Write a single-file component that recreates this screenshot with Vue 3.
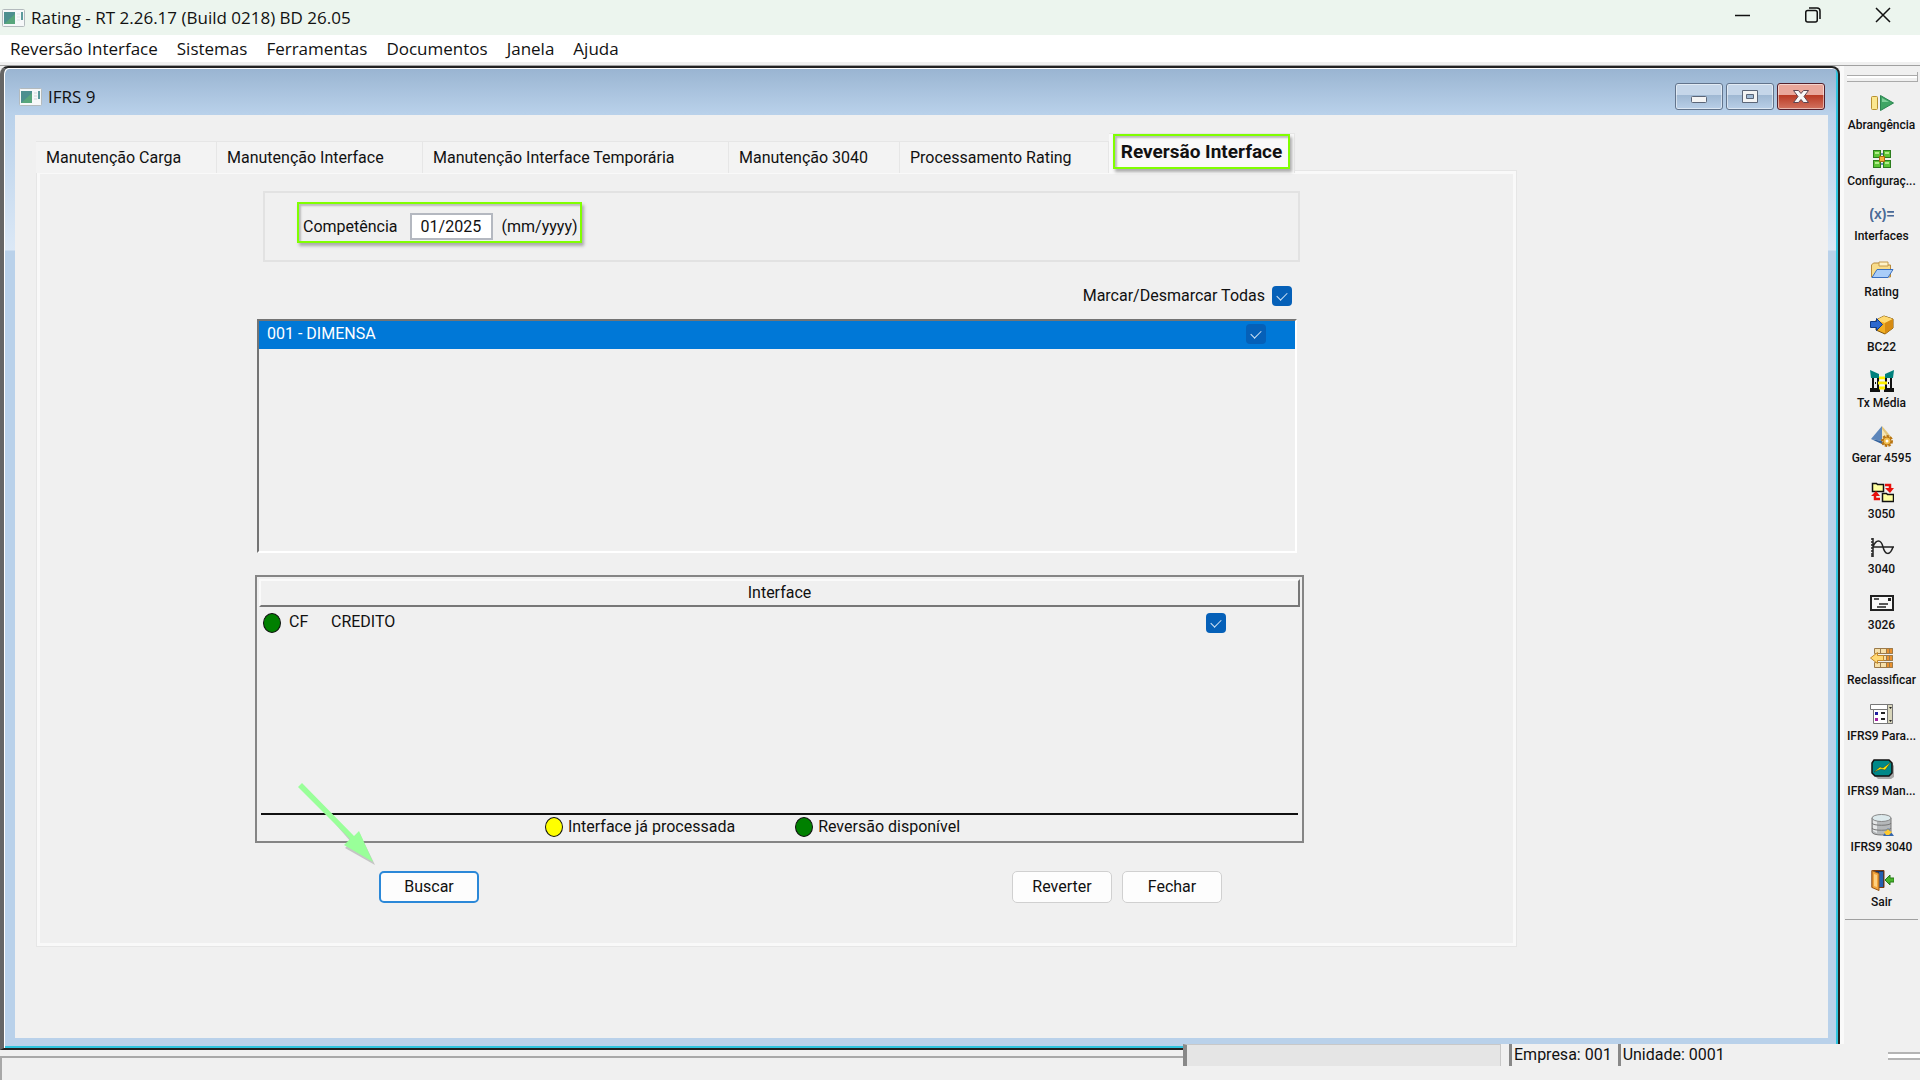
<script setup>
import { ref } from 'vue'

const menus = ['Reversão Interface', 'Sistemas', 'Ferramentas', 'Documentos', 'Janela', 'Ajuda']

const tabs = [
  'Manutenção Carga',
  'Manutenção Interface',
  'Manutenção Interface Temporária',
  'Manutenção 3040',
  'Processamento Rating',
  'Reversão Interface',
]
const activeTab = ref('Reversão Interface')

const competencia = ref('01/2025')
const todas = ref(true)
const empresas = ref([{ code: '001', name: 'DIMENSA', checked: true }])
const interfaces = ref([{ code: 'CF', name: 'CREDITO', checked: true }])

const tools = [
  {
    label: 'Abrangência',
    icon: '<rect x="1.5" y="4.5" width="6" height="13" rx="1" fill="#fbe78f" stroke="#b8902f"/><path d="M10.5 3.5v15l13-7.5z" fill="#3fa564" stroke="#2b8550"/><path d="M12 6v4l7 0z" fill="#7fd09a"/>',
  },
  {
    label: 'Configuraç...',
    icon: '<path d="M7 7l10 9M17 7L7 16M7 6h10M7 16h10" stroke="#3f6ea8" stroke-width="1.5"/><g fill="#5cc435" stroke="#2c7d1e"><rect x="3.5" y="2.5" width="7" height="7"/><rect x="13.5" y="2.5" width="7" height="7"/><rect x="3.5" y="12.5" width="7" height="7"/><rect x="13.5" y="12.5" width="7" height="7"/></g><path d="M5 4h4v2H5zM15 4h4v2h-4zM5 14h4v2H5zM15 14h4v2h-4z" fill="#b4ec8c"/><rect x="9.5" y="8.5" width="5" height="5" fill="#f3b13c" stroke="#a86a12"/>',
  },
  {
    label: 'Interfaces',
    icon: '<text x="12" y="16" text-anchor="middle" font-family="Liberation Sans, sans-serif" font-size="14" font-weight="700" fill="#4a6a96">(x)=</text>',
  },
  {
    label: 'Rating',
    icon: '<path d="M1.5 18V6l2-2h6l2 2h9v12z" fill="#f8dc8a" stroke="#b98a3a"/><path d="M9 3h9v4H9z" fill="#fff3c8" stroke="#c59a4a"/><path d="M2 18.5l5-8h16l-5 8z" fill="#a9cdf8" stroke="#3a6fc0"/>',
  },
  {
    label: 'BC22',
    icon: '<path d="M6 6l8-4 9 3v9l-8 6-9-4z" fill="#f1ae22" stroke="#7d5207"/><path d="M6 6l9 3 8-4-9-3z" fill="#ffd970"/><path d="M15 9v11l8-6V5z" fill="#d68b12"/><path d="M0.5 7.5h6V4.500l6 6-6 6v-3h-6z" fill="#2d68cf" stroke="#113a86"/>',
  },
  {
    label: 'Tx Média',
    icon: '<path d="M0 0l9 4v4H1zM24 0l-9 4v4h8z" fill="#00807c"/><path d="M3 8v11M8 8v13M0 21h10M16 8v13M21 8v11M14 21h10M0 19h10M14 19h10" stroke="#111" stroke-width="2"/><path d="M5 12h1v2H5zM18 12h1v2h-1z" fill="#111"/><path d="M9 8h6M8 13h9M9 18h6" stroke="#fff200" stroke-width="3"/><path d="M10 10h4M10 15h4" stroke="#fff"/>',
  },
  {
    label: 'Gerar 4595',
    icon: '<path d="M12 1l-11 13 11 2z" fill="#5d86bb"/><path d="M12 1l11 13-11 2z" fill="#e4c67c"/><path d="M1 14l11 2 2 4z" fill="#34639e"/><path d="M12 4l6 8-6 3z" fill="#f7e6b5"/><circle cx="17" cy="16" r="4" fill="none" stroke="#b87412" stroke-width="4" stroke-dasharray="2 1"/><circle cx="17" cy="16" r="4" fill="#f1bd4b" stroke="#b87412"/><circle cx="17" cy="16" r="1.5" fill="#fff"/>',
  },
  {
    label: '3050',
    icon: '<path d="M2.5 2.5h4l1 1h6v7h-11z" fill="#ffffa0" stroke="#111" stroke-width="1.5"/><path d="M12.5 12.5h4l1 1h6v7h-11z" fill="#ffffa0" stroke="#111" stroke-width="1.5"/><path d="M15 4h5v5M10 18H5v-5" fill="none" stroke="#e8100c" stroke-width="2.5"/><path d="M15 7h9l-4 5zM1 15h9l-4-5z" fill="#e8100c"/>',
  },
  {
    label: '3040',
    icon: '<path d="M3 2v19M1 3h2M1 6h2M1 9h2M1 12h2M1 15h2M1 18h2M1 20h2M3 11h21M3 11c3-8 8-8 10 0s7 9 10 0" fill="none" stroke="#222" stroke-width="1.5"/>',
  },
  {
    label: '3026',
    icon: '<rect x="1" y="4" width="22" height="14" fill="#f8f8f8" stroke="#222" stroke-width="2"/><path d="M4 7h5M9 12h9M7 15h9" stroke="#222" stroke-width="1.5"/><path d="M18 6h3v3h-3z" fill="#222"/>',
  },
  {
    label: 'Reclassificar',
    icon: '<g stroke="#9b7a4a"><path d="M4.5 1.5h18v5h-18zM4.5 8.5h18v5h-18zM4.5 15.5h18v5h-18z" fill="#f6dfa8"/><path d="M16.5 1.5h6v5h-6zM16.5 8.5h6v5h-6zM16.5 15.5h6v5h-6z" fill="#e9902e"/><path d="M10.5 2v4M10.5 16v4M19.5 2v4M19.5 9v4M19.5 16v4"/></g><path d="M0.5 11l7-5.5v3h6v5h-6v3z" fill="#ffd873" stroke="#c4892a"/>',
  },
  {
    label: 'IFRS9 Para...',
    icon: '<path d="M0.5 1.5h22v5h-22z" fill="#fff" stroke="#777"/><path d="M3.5 6.5h19v14h-19z" fill="#fff" stroke="#777"/><path d="M17.5 1.5h5v19h-5z" fill="#d8d5ba" stroke="#777"/><path d="M19 4h3l-1.5 2zM19 17h3l-1.5 2z" fill="#222"/><path d="M5 9h3v3H5z" fill="#2020a0"/><path d="M5 15h3v3H5z" fill="#a020a0"/><path d="M11 10h4M11 16h4" stroke="#222" stroke-width="2"/>',
  },
  {
    label: 'IFRS9 Man...',
    icon: '<path d="M5 5h17l2 3v11l-3 2H8l-3-3z" fill="#a8a8a8"/><path d="M4 2h15l3 3v10l-3 3H5l-3-3V5z" fill="#088" stroke="#111" stroke-width="1.5"/><path d="M4 14l6-5 3 1 8-6-6 8-4-1z" fill="#ffee00" stroke="#333" stroke-width=".5"/>',
  },
  {
    label: 'IFRS9 3040',
    icon: '<path d="M2 4v14c0 4 19 4 19 0V4z" fill="#b5b8ba" stroke="#777"/><path d="M3 5h4v14l-4-2z" fill="#e4e6e7"/><ellipse cx="11.5" cy="4" rx="9.5" ry="3.5" fill="#dce9ec" stroke="#888"/><path d="M2 9c0 3 19 3 19 0M2 14c0 3 19 3 19 0" fill="none" stroke="#777"/><path d="M18 14l6 8H13z" fill="#3567ad"/><path d="M18 15l2 2 2 1-3 3h-3l-2-3 2-1z" fill="#ffc92e"/>',
  },
  {
    label: 'Sair',
    icon: '<path d="M2 1.5h12v17H2z" fill="#17335f" stroke="#7c3c12"/><path d="M9 3h4v15H9z" fill="#2561b0"/><path d="M2 1.5l7 3v17l-7-3z" fill="#f2a33b" stroke="#9a5716"/><path d="M4 5l3 1v12l-3-1z" fill="#ffd080"/><path d="M15 11l5-5v3h4v4h-4v3z" fill="#48b52c" stroke="#267a17"/>',
  },
]
</script>

<template>
  <div class="app">
    <header class="title-bar">
      <svg class="app-icon" viewBox="0 0 24 18">
        <rect x="0.5" y="0.5" width="22" height="17" rx="1" fill="#f6f8f9" stroke="#b3babd" />
        <rect x="2" y="3" width="11" height="12" fill="#4c8f8f" />
        <path d="M2 15L13 5v10z" fill="#58a67c" />
        <path d="M15 5h3M15 8h3M15 11h3" stroke="#dfe3e6" />
        <rect x="19" y="3" width="2" height="8" fill="#5c9a9c" />
      </svg>
      <h1>Rating - RT 2.26.17 (Build 0218) BD 26.05</h1>
      <div class="window-controls">
        <button type="button" aria-label="Minimizar">
          <svg viewBox="0 0 16 16"><path d="M0 8.5h15" /></svg>
        </button>
        <button type="button" aria-label="Restaurar">
          <svg viewBox="0 0 16 16">
            <rect x="0.75" y="3.5" width="11.5" height="11.5" rx="2" />
            <path d="M4 1h8c2 0 3 1 3 3v8" />
          </svg>
        </button>
        <button type="button" aria-label="Sair do sistema">
          <svg viewBox="0 0 16 16"><path d="M1 1l14 14M15 1L1 15" /></svg>
        </button>
      </div>
    </header>

    <nav class="menu-bar">
      <button v-for="menu in menus" :key="menu" type="button">
        {{ menu }}
      </button>
    </nav>

    <div class="workspace">
      <main class="mdi-window">
        <div class="mdi-title">
          <svg class="app-icon" viewBox="0 0 24 18">
            <rect x="0.5" y="0.5" width="22" height="17" rx="1" fill="#f6f8f9" stroke="#b3babd" />
            <rect x="2" y="3" width="11" height="12" fill="#4c8f8f" />
            <path d="M2 15L13 5v10z" fill="#58a67c" />
            <path d="M15 5h3M15 8h3M15 11h3" stroke="#d0d5d8" />
            <rect x="19" y="3" width="2" height="8" fill="#5c9a9c" />
          </svg>
          <h2>IFRS 9</h2>
          <div class="mdi-controls">
            <button type="button" aria-label="Minimizar janela">
              <svg viewBox="0 0 24 18">
                <rect x="4.5" y="8.5" width="15" height="6" rx="1" fill="#f4f4f4" stroke="#5b6577" />
              </svg>
            </button>
            <button type="button" aria-label="Maximizar janela">
              <svg viewBox="0 0 24 18">
                <path d="M4.5 2.5h15v12h-15zM8.5 6.5v4h7v-4z" fill="#f4f4f4" fill-rule="evenodd" stroke="#5b6577" />
              </svg>
            </button>
            <button type="button" class="close" aria-label="Fechar janela">
              <svg viewBox="0 0 24 18">
                <path d="M4.5 2.5h5l2.5 3 2.5-3h5l-4.5 6 4.5 6h-5l-2.5-3-2.5 3h-5l4.5-6z" fill="#f8f8f8" stroke="#5f4550" />
              </svg>
            </button>
          </div>
        </div>

        <div class="mdi-client">
          <div class="tabs" role="tablist">
            <button
              v-for="tab in tabs"
              :key="tab"
              type="button"
              role="tab"
              :aria-selected="tab === activeTab"
              :class="{ active: tab === activeTab }"
              @click="activeTab = tab"
            >
              <span>{{ tab }}</span>
            </button>
          </div>

          <section class="tab-page">
            <div class="filter-box">
              <div class="filter highlight">
                <label for="competencia">Competência</label>
                <input id="competencia" v-model="competencia" type="text">
                <span>(mm/yyyy)</span>
              </div>
            </div>

            <label class="select-all">
              Marcar/Desmarcar Todas
              <input v-model="todas" type="checkbox">
            </label>

            <ul class="company-list">
              <li v-for="empresa in empresas" :key="empresa.code">
                <label>
                  <span>{{ empresa.code }} - {{ empresa.name }}</span>
                  <input v-model="empresa.checked" type="checkbox">
                </label>
              </li>
            </ul>

            <div class="interface-grid">
              <table>
                <thead>
                  <tr>
                    <th colspan="4">
                      Interface
                    </th>
                  </tr>
                </thead>
                <tbody>
                  <tr v-for="item in interfaces" :key="item.code">
                    <td class="col-status">
                      <i class="dot green" />
                    </td>
                    <td class="col-code">
                      {{ item.code }}
                    </td>
                    <td>{{ item.name }}</td>
                    <td class="col-check">
                      <input v-model="item.checked" type="checkbox" :aria-label="item.name">
                    </td>
                  </tr>
                </tbody>
              </table>
              <div class="legend">
                <span><i class="dot yellow" />Interface já processada</span>
                <span><i class="dot green" />Reversão disponível</span>
              </div>
              <svg class="arrow" viewBox="0 0 84 84">
                <path d="M5 2l51 52 6-5 15 31-30-17 6-6z" fill="#999" opacity=".5" transform="translate(1 2)" />
                <path d="M1 4l4-4 52 53 5-5 14 31-29-17 6-6z" fill="#99ff99" />
              </svg>
            </div>

            <div class="actions">
              <button type="button" class="default">
                Buscar
              </button>
              <div class="actions-right">
                <button type="button">
                  Reverter
                </button>
                <button type="button">
                  Fechar
                </button>
              </div>
            </div>
          </section>
        </div>
      </main>

      <aside class="toolbar">
        <div class="grip" />
        <div class="tools">
          <button v-for="tool in tools" :key="tool.label" type="button">
            <svg viewBox="0 0 24 22" v-html="tool.icon" />
            <span>{{ tool.label }}</span>
          </button>
        </div>
      </aside>
    </div>

    <footer class="status-bar">
      <div class="status-message" />
      <div class="status-panels">
        <div class="progress" />
        <span>Empresa: 001</span>
        <span>Unidade: 0001</span>
      </div>
      <div class="status-grip" />
    </footer>
  </div>
</template>

<style>
body {
  margin: 0;
  background: #f0f0f0;
}
</style>

<style scoped>
.app {
  display: flex;
  flex-direction: column;
  min-height: 100vh;
  background: #f0f0f0;
  color: #111;
  font-family: Roboto, 'Liberation Sans', sans-serif;
  font-size: 16px;
  line-height: 22px;
}

.app *,
.app *::before,
.app *::after {
  box-sizing: border-box;
}

button,
input {
  margin: 0;
  padding: 0;
  border: 0;
  background: none;
  color: inherit;
  font: inherit;
}

h1,
h2 {
  margin: 0;
  font-family: 'Open Sans', sans-serif;
  font-size: 17px;
  font-weight: 400;
}

.app-icon {
  width: 24px;
  height: 18px;
}

.title-bar {
  display: flex;
  align-items: center;
  gap: 5px;
  height: 35px;
  padding: 0 2px;
  background: #ecf5ee;
}

.window-controls {
  display: flex;
  margin-left: auto;
}

.window-controls button {
  width: 70px;
  height: 35px;
}

.window-controls svg {
  width: 16px;
  height: 16px;
  fill: none;
  stroke: #111;
  stroke-width: 1.5;
}

.menu-bar {
  display: flex;
  gap: 19px;
  height: 30px;
  padding: 0 10px;
  border-bottom: 3px solid #f0f0f0;
  background: #fff;
  font-family: 'Open Sans', sans-serif;
  font-size: 17px;
}

.workspace {
  display: flex;
  flex: 1;
  border-top: 1px solid #a0a0a0;
}

.mdi-window {
  display: flex;
  flex: 1;
  flex-direction: column;
  padding: 0 10px 10px 11px;
  border: solid #222;
  border-width: 2px 2px 2px 4px;
  border-left-color: #666;
  border-radius: 8px 8px 0 0;
  background: linear-gradient(#99b4d1, #b9d1ea 46px, #dbe8f6 182px, #b9d1ea 183px);
  box-shadow: inset 1px 1px #fff, inset -2px -2px #2fc4de;
}

.mdi-title {
  display: flex;
  align-items: center;
  gap: 5px;
  height: 47px;
  padding: 10px 3px 0 4px;
}

.mdi-controls {
  display: flex;
  gap: 3px;
  margin-left: auto;
}

.mdi-controls button {
  display: grid;
  place-items: center;
  width: 48px;
  height: 27px;
  border: 1px solid #62748c;
  border-radius: 3px;
  background: linear-gradient(#c5d6e9 45%, #9fb8d3 45%, #b9cfe7);
  box-shadow: inset 0 0 0 1px rgba(255, 255, 255, 0.5);
}

.mdi-controls .close {
  border-color: #54202c;
  background: linear-gradient(#e9a79b 45%, #b93a24 45%, #d27360);
}

.mdi-controls svg {
  width: 24px;
  height: 18px;
}

.mdi-client {
  flex: 1;
  padding: 18px 311px 0 21px;
  background: #f0f0f0;
}

.tabs {
  display: grid;
  grid-template-columns: 181px 206px 306px 171px 209px 186px;
  align-items: end;
  height: 37px;
}

.tabs button {
  height: 32px;
  padding-left: 10px;
  border: solid #e6e6e6;
  border-width: 1px 1px 0 0;
  background: #f3f3f3;
  text-align: left;
  white-space: nowrap;
}

.tabs .active {
  height: 40px;
  padding: 0 4px 4px;
  background: #f9f9f9;
  font-size: 19px;
  font-weight: 700;
}

.tabs .active span {
  display: block;
  padding: 5px 3px 4px;
  text-align: center;
}

.tabs .active span,
.highlight {
  border: 2px solid #80ff00;
  box-shadow: 2px 3px 3px #aaa, inset 2px 2px 2px #bbb;
}

.tab-page {
  padding: 20px 212px 43px 218px;
  border: 1px solid #e6e6e6;
  box-shadow: inset 0 0 0 3px #f9f9f9;
}

.filter-box {
  margin: 0 4px 0 8px;
  padding: 9px 32px 17px;
  border: 2px solid #e2e2e2;
}

.filter {
  display: inline-flex;
  align-items: center;
  height: 41px;
  padding: 8px 2px 0 4px;
  vertical-align: top;
}

.filter input {
  width: 83px;
  height: 27px;
  margin: 0 9px 0 12px;
  padding-left: 9px;
  border: 2px solid #b4b8c0;
  background: #fff;
}

.select-all {
  display: flex;
  align-items: center;
  justify-content: flex-end;
  gap: 7px;
  margin: 23px 12px 12px 0;
}

input[type='checkbox'] {
  display: grid;
  place-items: center;
  width: 20px;
  height: 20px;
  border-radius: 4px;
  appearance: none;
  background: #fff;
}

input[type='checkbox']:checked {
  background: #0560b8;
}

input[type='checkbox']:checked::after {
  content: '';
  width: 10px;
  height: 6px;
  margin-bottom: 3px;
  border: solid #cfe2f4;
  border-width: 0 0 1px 1px;
  transform: rotate(-45deg);
}

.company-list {
  height: 234px;
  margin: 0 7px 22px 2px;
  padding: 0;
  border: 2px solid #fff;
  border-top-color: #747474;
  border-left-color: #747474;
  list-style: none;
}

.company-list label {
  display: flex;
  align-items: center;
  justify-content: space-between;
  height: 28px;
  padding: 0 29px 2px 8px;
  background: #0078d7;
  color: #fff;
}

.interface-grid {
  position: relative;
  display: flex;
  flex-direction: column;
  height: 268px;
  padding: 2px;
  border: 2px solid #858585;
}

.interface-grid table {
  width: 100%;
  border-collapse: separate;
  border-spacing: 0;
}

.interface-grid th {
  height: 28px;
  padding: 0;
  border: 2px solid #fafafa;
  border-right-color: #777;
  border-bottom-color: #777;
  font-weight: 400;
}

.interface-grid td {
  height: 30px;
  padding: 0;
}

.interface-grid .col-status {
  width: 30px;
  padding-left: 4px;
}

.col-code {
  width: 42px;
}

.interface-grid .col-check {
  width: 94px;
  padding-top: 2px;
}

.dot {
  display: inline-block;
  width: 18px;
  height: 20px;
  border: 1px solid #111;
  border-radius: 50%;
  vertical-align: middle;
}

.green {
  background: #008000;
}

.yellow {
  background: #ff0;
}

.legend {
  display: flex;
  justify-content: center;
  gap: 60px;
  margin: auto 2px 0;
  padding-right: 54px;
  border-top: 2px solid #111;
}

.legend span {
  display: flex;
  align-items: center;
  gap: 5px;
  height: 24px;
}

.arrow {
  position: absolute;
  top: 206px;
  left: 40px;
  width: 84px;
  height: 84px;
}

.actions {
  display: flex;
  justify-content: space-between;
  margin-top: 28px;
  padding: 0 82px 0 124px;
}

.actions-right {
  display: flex;
  gap: 10px;
}

.actions button {
  width: 100px;
  height: 32px;
  border: 1px solid #d0d0d0;
  border-radius: 5px;
  background: #fdfdfd;
}

.actions .default {
  border: 2px solid #2b88d8;
}

.toolbar {
  width: 80px;
  padding: 5px 2px 0 5px;
  background: #f0f0f0;
  box-shadow: inset 4px 0 #fafafa;
}

.grip {
  height: 10px;
  margin: 1px 0 4px 2px;
  border: solid #aaa;
  border-width: 0 1px 1px 0;
  background: linear-gradient(#f0f0f0 3px, #aaa 3px, #aaa 4px, #fff 4px, #fff 6px, #f0f0f0 6px);
}

.tools {
  display: flex;
  flex-direction: column;
  height: 834px;
  border-bottom: 1px solid #a0a0a0;
}

.tools button {
  display: flex;
  flex: 1;
  flex-direction: column;
  align-items: center;
  padding-top: 6px;
  font-size: 12px;
  font-weight: 500;
  line-height: 16px;
  white-space: nowrap;
}

.tools svg {
  width: 24px;
  height: 22px;
  margin-bottom: 3px;
}

.status-bar {
  display: flex;
  height: 30px;
}

.status-message {
  flex: 1;
  margin-top: 6px;
  border: solid #a8a8a8;
  border-width: 2px 0 0 2px;
}

/* The panels dock over the bottom frame of the child window. */
.status-panels {
  position: relative;
  display: flex;
  width: 705px;
  height: 22px;
  margin-top: -6px;
  background: #f0f0f0;
  line-height: 22px;
}

.progress {
  width: 318px;
  margin-right: 8px;
  border: solid #c8c8c8;
  border-width: 1px 1px 0 0;
  border-left: 4px solid #888;
  background: #e5e5e5;
}

.status-panels span {
  padding: 0 6px 0 2px;
  border-left: 3px solid #888;
}

.status-grip {
  width: 32px;
  height: 8px;
  margin-top: 2px;
  border: solid #b4b4b4;
  border-width: 2px 0;
  background: #fff;
}
</style>
